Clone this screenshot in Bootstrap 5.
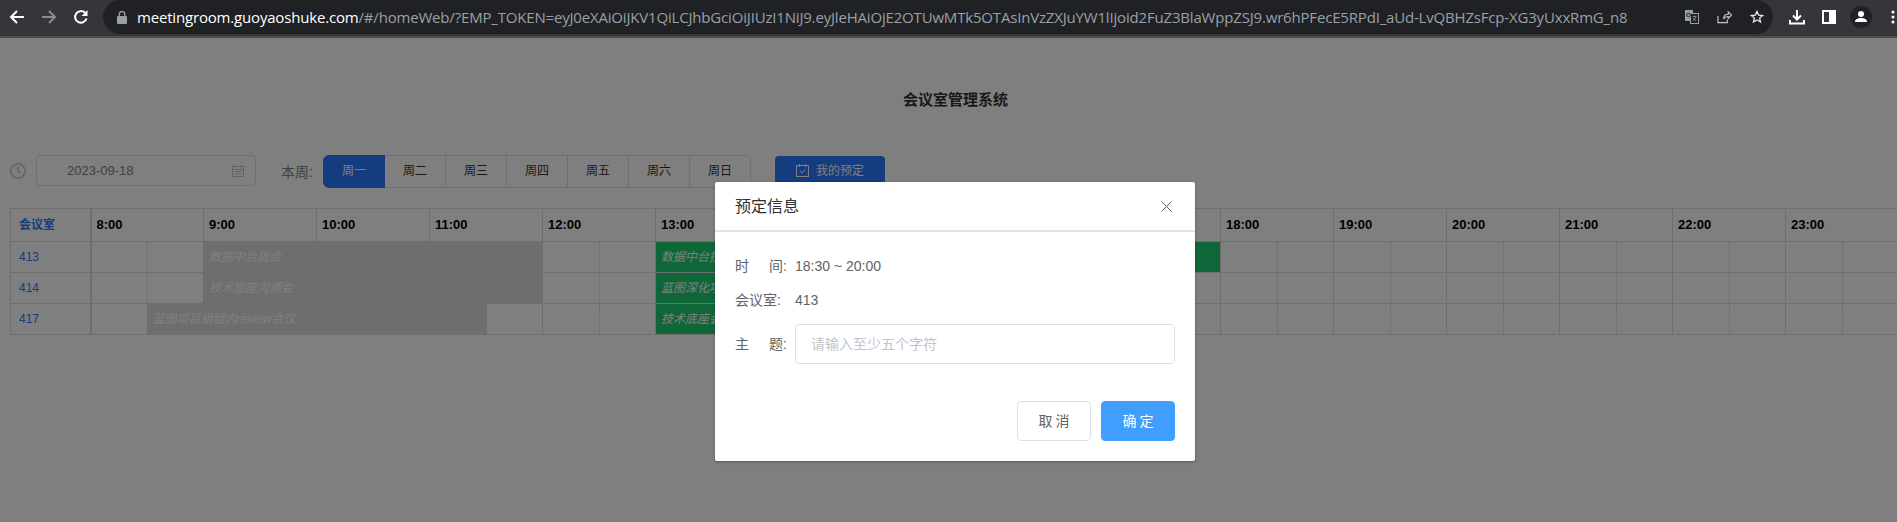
<!doctype html>
<html lang="zh-CN">

<head>
    <meta charset="utf-8">
    <meta name="viewport" content="width=device-width, initial-scale=1">
    <title>会议室管理系统</title>
    <link href="https://cdn.jsdelivr.net/npm/bootstrap@5.3.3/dist/css/bootstrap.min.css" rel="stylesheet">
    <style>
        html, body { height: 100%; overflow: hidden; }
        body {
            background: #fff;
            font-family: "Liberation Sans", "Noto Sans CJK SC", sans-serif;
            font-size: 13px;
            color: #333;
        }
        .chrome-bar {
            height: 38px;
            background: #35363a;
            border-bottom: 2px solid #4b4c52;
            padding-left: 1px;
        }
        .chrome-btn { width: 32px; height: 34px; flex: none; }
        .chrome-pill {
            height: 34px;
            width: 1670px;
            margin-left: 6px;
            flex: none;
            background: #202124;
            border-radius: 17px;
            padding: 0 9px 0 14px;
        }
        .url-text {
            font-family: "Open Sans", sans-serif;
            font-size: 15px;
            letter-spacing: -.18px;
            color: #9aa0a6;
            white-space: nowrap;
            margin-left: 10px;
        }
        .url-text b { font-weight: 400; color: #fff; }
        .pill-icons { gap: 18px; }
        .side-icons { height: 34px; margin-left: 16px; }
        .side-icons svg { flex: none; }
        .side-panel { margin-left: 17px; }
        .side-avatar { margin-left: 14px; }
        .side-dots { margin-left: 19px; }
        .page-wrap { position: relative; height: 484px; overflow: hidden; }
        .page-title {
            font-size: 15px;
            font-weight: 700;
            color: #333;
            text-align: center;
            height: 117px;
            padding: 52px 0 0 14px;
            line-height: 20px;
        }
        .tool-row { padding-left: 10px; height: 53px; }
        .date-box {
            width: 220px;
            height: 31px;
            margin-left: 10px;
            border: 1px solid #dcdfe6;
            border-radius: 4px;
            padding: 0 11px 0 30px;
            color: #808285;
        }
        .week-label { margin: 0 10px 0 25px; font-size: 14px; line-height: 34px; color: #808285; }
        .week-group { height: 33px; }
        .week-group .btn {
            width: 62px;
            padding: 0;
            font-size: 12px;
            line-height: 31px;
            color: #333;
            border-color: #dcdfe6;
            background: #fff;
        }
        .week-group .btn.active { background: #2979ff; border-color: #2979ff; color: #fff; }
        .mine-btn {
            width: 110px;
            height: 40px;
            margin: 1px 0 0 24px;
            align-self: flex-start;
            background: #2979ff;
            border: 0;
            border-radius: 4px;
            color: #fff;
            font-size: 12px;
            padding: 0;
            line-height: 31px;
            gap: 7px;
        }
        .room-table {
            table-layout: fixed;
            width: 1888px;
            margin: 0 0 0 10px;
            border-collapse: collapse;
        }
        .room-table td, .room-table th {
            padding: 0;
            height: 31px;
            border: 1px solid #dcdcdc;
            font-size: 12px;
            overflow: hidden;
            white-space: nowrap;
        }
        .room-table tr.hour-row th { height: 33px; font-size: 13px; color: #000; padding-left: 5px; }
        .room-table .room-cell { padding-left: 8px; color: #2979ff; border-right-width: 2px; font-weight: 400; }
        .room-table tr.hour-row th.room-cell { font-size: 12px; font-weight: 700; padding-left: 8px; color: #2979ff; }
        .room-table .half-a { border-right: 1px dotted #cfcfcf; }
        .room-table .half-b { border-left: 1px dotted #cfcfcf; }
        .room-table .booked-gray { background: #dcdcdc; color: #fff; font-style: italic; padding-left: 5px; border-color: #dcdcdc; }
        .room-table .booked-green { background: #1fcc70; color: #fff; font-style: italic; padding-left: 5px; border-color: #dcdcdc; }
        .mask-layer { position: absolute; inset: 0; z-index: 5; background: rgba(0, 0, 0, .5); }
        .dialog-box {
            position: absolute;
            left: 715px;
            top: 144px;
            z-index: 6;
            width: 480px;
            height: 279px;
            background: #fff;
            border-radius: 2px;
            box-shadow: 0 1px 3px rgba(0, 0, 0, .3);
            color: #606266;
            font-size: 14px;
        }
        .dialog-head {
            height: 50px;
            padding: 1px 23px 0 20px;
            border-bottom: 2px solid #e2e2e2;
            font-size: 16px;
            color: #303133;
        }
        .dialog-body { padding: 17px 20px 0 20px; }
        .info-line { height: 34px; line-height: 34px; }
        .info-label { width: 60px; flex: none; }
        .spread-label { display: inline-flex; justify-content: space-between; width: 52px; }
        .topic-line { margin-top: 7px; }
        .topic-input {
            width: 380px;
            height: 40px;
            border: 1px solid #dcdfe6;
            border-radius: 4px;
            padding: 0 15px;
            font-size: 14px;
            color: #606266;
            box-shadow: none;
        }
        .topic-input::placeholder { color: #c0c4cc; }
        .dialog-foot { margin-top: 37px; padding-right: 20px; gap: 10px; }
        .foot-btn {
            width: 74px;
            height: 40px;
            padding: 0;
            font-size: 14px;
            letter-spacing: 3px;
            text-indent: 3px;
            border-radius: 4px;
        }
        .foot-cancel { background: #fff; border: 1px solid #dcdfe6; color: #606266; }
        .foot-ok { background: #409eff; border: 1px solid #409eff; color: #fff; }
    </style>
</head>

<body>

    <div class="chrome-bar d-flex align-items-start">
        <span class="chrome-btn d-flex align-items-center justify-content-center">
            <svg width="16" height="16" viewBox="0 0 16 16" fill="none" stroke="#fff" stroke-width="2"><path d="M15 8H2M8 2 2 8l6 6"/></svg>
        </span>
        <span class="chrome-btn d-flex align-items-center justify-content-center">
            <svg width="16" height="16" viewBox="0 0 16 16" fill="none" stroke="#8a8b8e" stroke-width="2"><path d="M1 8h13M8 2l6 6-6 6"/></svg>
        </span>
        <span class="chrome-btn d-flex align-items-center justify-content-center">
            <svg width="16" height="16" viewBox="0 0 16 16" fill="none" stroke="#fff" stroke-width="2"><path d="M13.5 9.5A5.8 5.8 0 1 1 12 3.8"/><path d="M14.5 1v6h-6z" fill="#fff" stroke="none"/></svg>
        </span>
        <div class="chrome-pill d-flex align-items-center">
            <svg width="10" height="13" viewBox="0 0 10 13" class="flex-none"><rect x="0" y="5" width="10" height="8" rx="1" fill="#9aa0a6"/><path d="M2.2 5.5V3.4a2.8 2.8 0 0 1 5.6 0v2.1" fill="none" stroke="#9aa0a6" stroke-width="1.3"/></svg>
            <span class="url-text"><b>meetingroom.guoyaoshuke.com</b>/#/homeWeb/?EMP_TOKEN=eyJ0eXAiOiJKV1QiLCJhbGciOiJIUzI1NiJ9.eyJleHAiOjE2OTUwMTk5OTAsInVzZXJuYW1lIjoid2FuZ3BlaWppZSJ9.wr6hPFecE5RPdI_aUd-LvQBHZsFcp-XG3yUxxRmG_n8</span>
            <span class="ms-auto d-flex align-items-center pill-icons">
                <svg width="14" height="14" viewBox="0 0 14 14"><rect x="0" y="0" width="8" height="11" fill="#9aa0a6"/><rect x="5.500" y="3.500" width="8" height="10" fill="#202124" stroke="#9aa0a6"/><circle cx="3.500" cy="5" r="1.800" fill="none" stroke="#202124"/><path d="M7.500 6.500h4M9.500 5.500v1M8 11l3-4M8 8l3 3" fill="none" stroke="#9aa0a6" stroke-width=".8"/></svg>
                <svg width="15" height="14" viewBox="0 0 16 14" fill="none" stroke="#c4c7c5" stroke-width="1.2"><path d="M1 6v7h10v-3M7 9c0-4 3-5 5-5V1.500L15.500 5 12 8.500V6.500C10 6.500 8 7 7 9z"/></svg>
                <svg width="14" height="14" viewBox="0 0 15 15" fill="none" stroke="#e8eaed" stroke-width="1.400"><path d="M7.500 1.500 9.300 5.500l4.200.4-3.200 2.800 1 4.200-3.800-2.200-3.800 2.200 1-4.200L1.500 5.900l4.200-.4z"/></svg>
            </span>
        </div>
        <span class="side-icons d-flex align-items-center">
            <svg width="16" height="16" viewBox="0 0 16 16"><path d="M8 1v9M4 6.500 8 10.500l4-4" fill="none" stroke="#fff" stroke-width="2"/><path d="M1 11v3.500h14V11" fill="none" stroke="#fff" stroke-width="2"/></svg>
            <svg width="14" height="14" viewBox="0 0 14 14" class="side-panel"><rect x="1" y="1" width="12" height="12" fill="none" stroke="#fff" stroke-width="2"/><rect x="7" y="1" width="6" height="12" fill="#fff"/></svg>
            <svg width="22" height="22" viewBox="0 0 22 22" class="side-avatar"><circle cx="11" cy="11" r="11" fill="#202124"/><circle cx="11" cy="8" r="3" fill="#fff"/><path d="M5 16c0-3 3-4 6-4s6 1 6 4z" fill="#fff"/></svg>
            <svg width="4" height="14" viewBox="0 0 4 14" class="side-dots"><circle cx="2" cy="2" r="1.500" fill="#fff"/><circle cx="2" cy="7" r="1.500" fill="#fff"/><circle cx="2" cy="12" r="1.500" fill="#fff"/></svg>
        </span>
    </div>

    <div class="page-wrap">
        <div class="page-title">会议室管理系统</div>

        <div class="tool-row d-flex align-items-start">
            <svg width="16" height="16" viewBox="0 0 16 16" class="mt-2 flex-none" fill="none" stroke="#c0c4cc" stroke-width="1.500"><circle cx="8" cy="8" r="7.200"/><path d="M8 3.500V8l3 2"/></svg>
            <div class="date-box d-flex align-items-center justify-content-between">
                <span>2023-09-18</span>
                <svg width="12" height="12" viewBox="0 0 12 12" fill="none" stroke="#c0c4cc"><rect x=".5" y="1.500" width="11" height="10"/><path d="M.5 4.500h11M3 0v2M9 0v2M3 6.500h6M3 9h6"/></svg>
            </div>
            <span class="week-label">本周:</span>
            <div class="btn-group week-group" role="group">
                <button type="button" class="btn active">周一</button>
                <button type="button" class="btn">周二</button>
                <button type="button" class="btn">周三</button>
                <button type="button" class="btn">周四</button>
                <button type="button" class="btn">周五</button>
                <button type="button" class="btn">周六</button>
                <button type="button" class="btn">周日</button>
            </div>
            <button type="button" class="btn mine-btn d-flex justify-content-center">
                <svg width="13" height="13" viewBox="0 0 13 13" class="mt-2" fill="none" stroke="#fff"><rect x=".5" y="1.500" width="12" height="11"/><path d="M3.500 0v3M9.500 0v3M4 7l2 2 3-3.500"/></svg>
                我的预定
            </button>
        </div>

        <table class="room-table" id="roomTable"></table>

        <div class="mask-layer"></div>

        <div class="dialog-box" role="dialog">
            <div class="dialog-head d-flex align-items-center justify-content-between">
                <span>预定信息</span>
                <svg width="11" height="11" viewBox="0 0 11 11" fill="none" stroke="#606266" stroke-width="1"><path d="M.5.5l10 10M10.500.5l-10 10"/></svg>
            </div>
            <div class="dialog-body">
                <div class="info-line d-flex">
                    <span class="info-label"><span class="spread-label"><span>时</span><span>间:</span></span></span>
                    <span>18:30 ~ 20:00</span>
                </div>
                <div class="info-line d-flex">
                    <span class="info-label">会议室:</span>
                    <span>413</span>
                </div>
                <div class="d-flex align-items-center topic-line">
                    <span class="info-label"><span class="spread-label"><span>主</span><span>题:</span></span></span>
                    <input type="text" class="form-control topic-input" placeholder="请输入至少五个字符">
                </div>
            </div>
            <div class="dialog-foot d-flex justify-content-end">
                <button type="button" class="btn foot-btn foot-cancel">取消</button>
                <button type="button" class="btn foot-btn foot-ok">确定</button>
            </div>
        </div>
    </div>

    <script src="https://cdn.jsdelivr.net/npm/bootstrap@5.3.3/dist/js/bootstrap.bundle.min.js"></script>
    <script>
        // half-hour index counted from 8:00, 32 slots up to 24:00
        const rooms = [
            { name: "413", bookings: [
                { start: 2, end: 8, title: "数据中台周会", kind: "booked-gray" },
                { start: 10, end: 20, title: "数据中台技术方案讨论", kind: "booked-green" }] },
            { name: "414", bookings: [
                { start: 2, end: 8, title: "技术底座沟通会", kind: "booked-gray" },
                { start: 10, end: 16, title: "蓝图深化项目沟通会", kind: "booked-green" }] },
            { name: "417", bookings: [
                { start: 1, end: 7, title: "蓝图项目组组内review会议", kind: "booked-gray" },
                { start: 10, end: 16, title: "技术底座会议", kind: "booked-green" }] }
        ];

        let html = '<colgroup><col style="width:80px">';
        for (let i = 0; i < 32; i++) html += '<col style="width:56.5px">';
        html += '</colgroup><tr class="hour-row"><th class="room-cell">会议室</th>';
        for (let h = 8; h < 24; h++) html += `<th colspan="2">${h}:00</th>`;
        html += '</tr>';

        rooms.forEach(room => {
            html += `<tr><td class="room-cell">${room.name}</td>`;
            let slot = 0;
            while (slot < 32) {
                const hit = room.bookings.find(b => b.start === slot);
                if (hit) {
                    html += `<td colspan="${hit.end - hit.start}" class="${hit.kind}">${hit.title}</td>`;
                    slot = hit.end;
                } else {
                    html += `<td class="${slot % 2 ? 'half-b' : 'half-a'}"></td>`;
                    slot++;
                }
            }
            html += '</tr>';
        });
        document.getElementById("roomTable").innerHTML = html;
    </script>

</body>

</html>
